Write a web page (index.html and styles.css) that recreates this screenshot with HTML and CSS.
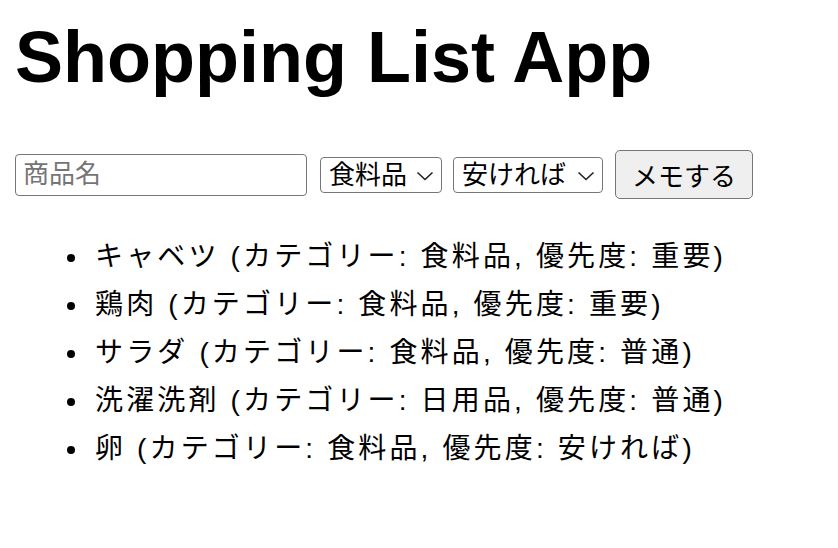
FILE: index.html
```html
<!DOCTYPE html>
<html>
    <head>
        <meta charset="utf-8">
        <title>Shopping List App</title>
        <link rel="stylesheet" href="styles.css">
    </head>
  <body>
    <h1 class="title">Shopping List App</h1>
    <form class="add-form" action="">
        <input class="item-name" type="text" placeholder="商品名">
        <span class="select-wrap cat">
            <select class="pick">
                <option>食料品</option>
                <option>日用品</option>
            </select>
            <svg class="chev" width="18" height="10" viewBox="0 0 18 10"><path d="M1.5 1.5 L9 8.5 L16.5 1.5" fill="none" stroke="#222" stroke-width="1.6"/></svg>
        </span>
        <span class="select-wrap prio">
            <select class="pick">
                <option>安ければ</option>
                <option>普通</option>
                <option>重要</option>
            </select>
            <svg class="chev" width="18" height="10" viewBox="0 0 18 10"><path d="M1.5 1.5 L9 8.5 L16.5 1.5" fill="none" stroke="#222" stroke-width="1.6"/></svg>
        </span>
        <button class="memo" type="button">メモする</button>
    </form>
    <ul class="items">
        <li>キャベツ (カテゴリー: 食料品, 優先度: 重要)</li>
        <li>鶏肉 (カテゴリー: 食料品, 優先度: 重要)</li>
        <li>サラダ (カテゴリー: 食料品, 優先度: 普通)</li>
        <li>洗濯洗剤 (カテゴリー: 日用品, 優先度: 普通)</li>
        <li>卵 (カテゴリー: 食料品, 優先度: 安ければ)</li>
    </ul>
  </body>
</html>
```
FILE: styles.css
```css
* {
    margin: 0;
    padding: 0;
    box-sizing: border-box;
}
body {
    padding: 0 15px;
    font-family: "Liberation Sans", "Noto Sans CJK JP", sans-serif;
    color: #000;
    background: #fff;
}
.title {
    margin-top: 17px;
    font-size: 72px;
    line-height: 80px;
    font-weight: bold;
}
.add-form {
    display: flex;
    align-items: center;
    margin-top: 53px;
}
.item-name {
    width: 292px;
    height: 42px;
    padding: 0 7px;
    border: 1.5px solid #767676;
    border-radius: 4px;
    font: 26px "Liberation Sans", "Noto Sans CJK JP", sans-serif;
    color: #000;
    outline: 0;
}
.item-name::placeholder {
    color: #757575;
}
.select-wrap {
    position: relative;
    display: inline-block;
    margin-left: 13px;
}
.select-wrap.prio {
    margin-left: 11px;
}
.pick {
    -webkit-appearance: none;
    appearance: none;
    height: 36px;
    padding: 0 0 0 8px;
    border: 1.5px solid #767676;
    border-radius: 4px;
    background: #fff;
    font: 26px/32px "Liberation Sans", "Noto Sans CJK JP", sans-serif;
    color: #000;
    outline: 0;
}
.cat .pick {
    width: 122px;
}
.prio .pick {
    width: 150px;
}
.chev {
    position: absolute;
    top: 14px;
    right: 8px;
    pointer-events: none;
}
.memo {
    margin-left: 12px;
    width: 138px;
    height: 49px;
    border: 1.5px solid #767676;
    border-radius: 5px;
    background: #efefef;
    font: 26px "Liberation Sans", "Noto Sans CJK JP", sans-serif;
    color: #000;
}
.items {
    margin-top: 34px;
    padding-left: 75px;
    font-size: 28px;
    line-height: 48px;
    letter-spacing: 3.15px;
}
.items li {
    padding-left: 5px;
}
```
